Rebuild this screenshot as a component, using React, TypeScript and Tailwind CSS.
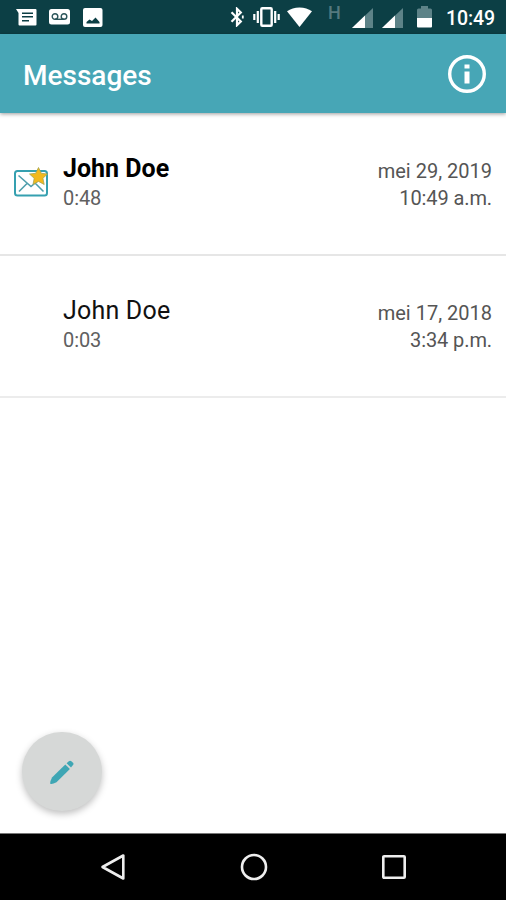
type Message = {
  name: string;
  duration: string;
  date: string;
  time: string;
  unread: boolean;
};

const messages: Message[] = [
  { name: 'John Doe', duration: '0:48', date: 'mei 29, 2019', time: '10:49 a.m.', unread: true },
  { name: 'John Doe', duration: '0:03', date: 'mei 17, 2018', time: '3:34 p.m.', unread: false },
];

function SignalIcon({ className }: { className: string }) {
  return (
    <svg viewBox="0 0 21 20" className={className}>
      <path d="M21 0v20H0z" fill="#5d8388" />
      <path d="M13 7.600V20H0z" fill="#fff" />
    </svg>
  );
}

function StatusBar() {
  return (
    <div className="flex h-[34px] items-start bg-[#0c3f45] pl-4">
      <svg viewBox="0 0 21 17" className="mt-[9px] h-[17px] w-[21px]">
        <path d="M0 0h19.500q1 0 1 1v14.500q0 1-1 1h-16q-1 0-1-1V4z" fill="#fff" />
        <path d="M6 4.300h11M6 7.800h11M6 11.800h7" stroke="#0c3f45" strokeWidth="1.600" />
      </svg>
      <svg viewBox="0 0 21 16" className="mt-[9px] ml-3 h-4 w-[21px]">
        <rect width="21" height="15.500" rx="2.500" fill="#fff" />
        <g fill="none" stroke="#2b555a" strokeWidth="1.400">
          <circle cx="6" cy="7.500" r="2.800" />
          <circle cx="15" cy="7.500" r="2.800" />
          <path d="M6 10.300h9" />
        </g>
      </svg>
      <svg viewBox="0 0 20 19" className="mt-2 ml-[13px] h-[19px] w-5">
        <rect width="19.500" height="19" rx="2" fill="#fff" />
        <path d="M3.500 15.500V14l3-2.500L9 13l3.500-3.500 4 4.500v1.500z" fill="#0c3f45" />
      </svg>

      <svg viewBox="0 0 14 20" className="mt-[7px] ml-[127px] h-5 w-3.5" fill="none" stroke="#fff" strokeWidth="2.200">
        <path d="M1.500 5.300l9.300 9.200L7 18.200V1.800l3.800 3.700-9.300 9.200" />
        <path d="M12.800 8.500v3" strokeWidth="1.800" />
      </svg>
      <svg viewBox="0 0 27 20" className="mt-[7px] ml-[9px] h-5 w-[27px]">
        <rect x="8.300" y="1.300" width="10.400" height="17.400" rx="1" fill="none" stroke="#fff" strokeWidth="2.400" />
        <path d="M4.800 4v12M22.200 4v12M1.300 7v6M25.700 7v6" stroke="#fff" strokeWidth="2.200" />
      </svg>
      <svg viewBox="0 0 25 20" className="mt-[7px] ml-[7px] h-5 w-[25px]">
        <path d="M12.500 20L0 4.300C3.500 1.600 7.600.4 12.500.4s9 1.200 12.500 3.900z" fill="#fff" />
      </svg>
      <span className="mt-1 ml-4 w-3 text-[18px] leading-[18px] font-medium text-[#55797e]">H</span>
      <SignalIcon className="mt-2 ml-3 h-5 w-[21px]" />
      <SignalIcon className="mt-2 ml-[9px] h-5 w-[21px]" />
      <svg viewBox="0 0 15 22" className="mt-1.5 ml-3.5 h-[22px] w-[15px]">
        <path d="M4 0h7v2.500h2.500q1.500 0 1.500 1.500v9H0V4q0-1.500 1.500-1.500H4z" fill="#5d8388" />
        <path d="M0 12h15v8.500q0 1-1 1H1q-1 0-1-1z" fill="#fff" />
      </svg>
      <span className="mt-2 ml-3.5 text-[19.500px] leading-[22px] font-medium tracking-[-0.1px] text-white">10:49</span>
    </div>
  );
}

function AppBar() {
  return (
    <header className="relative flex h-[79px] items-center justify-between bg-[#47a6b6] pr-5 pl-[23px] shadow-[0_1px_4px_rgba(0,0,0,0.4)]">
      <h1 className="mt-1 text-[28px] leading-8 font-medium text-white">Messages</h1>
      <button aria-label="Info">
        <svg viewBox="0 0 38 38" className="h-[38px] w-[38px]">
          <circle cx="19" cy="19" r="17.300" fill="none" stroke="#fff" strokeWidth="3.400" />
          <path d="M16.500 9.500h5v4h-5zM16.500 16.500h5v12h-5z" fill="#fff" />
        </svg>
      </button>
    </header>
  );
}

function UnreadIcon() {
  return (
    <svg viewBox="0 0 36 30" className="h-[30px] w-9">
      <rect x="2" y="4" width="32" height="24.500" rx="2.500" fill="#fff" stroke="#35a0b0" strokeWidth="2" />
      <path d="M5.500 8.500L18 19.500l13-11M6 24.500l8-8M30.500 24.500l-8-8" fill="none" stroke="#4d9eac" strokeWidth="1.600" />
      <path
        d="M25.500.5l2.800 5.800 6.200.7-4.600 4.300 1.300 6.200-5.700-3.100-5.500 3.100 1.200-6.200L16.500 7l6.200-.7z"
        fill="#f2b91d"
        stroke="#a5a653"
        strokeWidth=".8"
      />
    </svg>
  );
}

function MessageRow({ message }: { message: Message }) {
  return (
    <li className="flex h-[142px] border-b-2 border-[#e6e6e6] pr-3.5 pl-[13px] last:border-[#ececec]">
      <div className="mt-[53px] w-[50px]">{message.unread && <UnreadIcon />}</div>
      <div className="mt-10 flex-1">
        <p
          className={
            message.unread
              ? 'text-[25px] leading-[30px] font-bold text-black'
              : 'text-[25px] leading-[30px] tracking-[0.2px] text-[#111]'
          }
        >
          {message.name}
        </p>
        <p className="text-[20px] leading-7 tracking-[-0.1px] text-[#606060]">{message.duration}</p>
      </div>
      <div className="mt-11 text-right text-[20px] leading-[27px] text-[#555]">
        <p>{message.date}</p>
        <p className="tracking-[-0.1px]">{message.time}</p>
      </div>
    </li>
  );
}

function NavBar() {
  return (
    <nav className="flex h-[67px] items-center justify-between border-t border-[#777] bg-black pr-[99px] pl-[100px]">
      <svg viewBox="0 0 26 28" className="h-7 w-[26px]" fill="none" stroke="#eee" strokeWidth="2.600">
        <path d="M23.300 2.500v23L2.500 14z" strokeLinejoin="round" />
      </svg>
      <svg viewBox="0 0 28 28" className="h-7 w-7" fill="none" stroke="#eee" strokeWidth="2.600">
        <circle cx="14" cy="14" r="12" />
      </svg>
      <svg viewBox="0 0 26 26" className="h-[26px] w-[26px]" fill="none" stroke="#eee" strokeWidth="2.600">
        <rect x="2.300" y="2.300" width="21.400" height="21.400" rx=".8" />
      </svg>
    </nav>
  );
}

export default function App() {
  return (
    <div className="flex h-[900px] w-[506px] flex-col overflow-hidden bg-white font-['Roboto',sans-serif]">
      <StatusBar />
      <AppBar />
      <main className="flex flex-1 flex-col justify-between">
        <ul className="pt-px">
          {messages.map((message) => (
            <MessageRow key={message.date} message={message} />
          ))}
        </ul>
        <button
          aria-label="Edit"
          className="mb-[22px] ml-[22px] flex h-[79px] w-20 items-center justify-center rounded-full bg-[#d6d8d7] shadow-[0_3px_7px_rgba(0,0,0,0.25)]"
        >
          <svg viewBox="0 0 24 24" className="h-6 w-6" fill="#3fa6b4">
            <path d="M.3 23.700q-.6-1.500 1.700-6.200L15.300 4.400l4.600 4.500L6.500 22.200Q2 24.500.3 23.700z" />
            <path d="M16.600 3.200l2.200-2q1.400-1 2.600 0l1.600 1.500q1 1.200 0 2.400l-2 2.300z" />
          </svg>
        </button>
      </main>
      <NavBar />
    </div>
  );
}
